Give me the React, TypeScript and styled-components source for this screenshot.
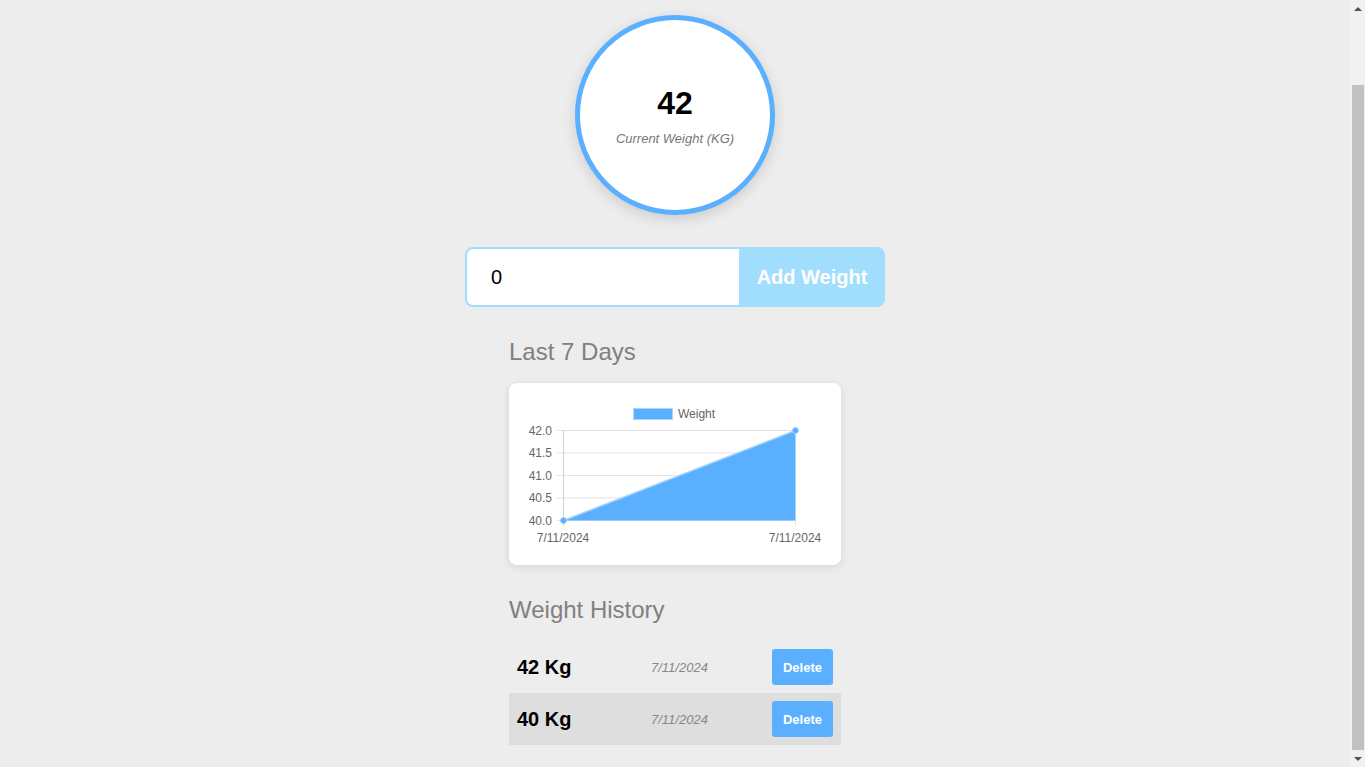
import React, { useEffect } from "react";
import styled, { createGlobalStyle } from "styled-components";

const BLUE = "#5ab0ff";
const LIGHT_BLUE = "#a1ddfd";

const GlobalStyle = createGlobalStyle`
  html, body {
    margin: 0;
    padding: 0;
    background: #ededed;
    font-family: "Liberation Sans", Arial, sans-serif;
  }
  * { box-sizing: border-box; }
`;

const Page = styled.main`
  display: flex;
  flex-direction: column;
  align-items: center;
  padding: 101px 15px 22px 0;
`;

/* decorative copy of the browser's classic scrollbar, drawn over the page edge */
const ScrollRail = styled.aside`
  position: fixed;
  top: 0;
  right: 0;
  width: 15px;
  height: 100vh;
  background: #f1f1f1;
  display: flex;
  flex-direction: column;
`;

const ScrollArrow = styled.div<{ $down?: boolean }>`
  height: 17px;
  display: flex;
  align-items: center;
  justify-content: center;
  &::after {
    content: "";
    width: 0;
    height: 0;
    border-left: 4px solid transparent;
    border-right: 4px solid transparent;
    ${(p) =>
      p.$down ? "border-top: 4px solid #505050;" : "border-bottom: 4px solid #505050;"}
  }
`;

const ScrollTrack = styled.div`
  flex: 1;
  display: flex;
  flex-direction: column;
  justify-content: flex-end;
  padding: 0 1px 0 2px;
`;

const ScrollThumb = styled.div`
  height: 665px;
  background: #c1c1c1;
`;

const WeightCircle = styled.div`
  width: 200px;
  height: 200px;
  border-radius: 50%;
  border: 5px solid ${BLUE};
  background: #fff;
  box-shadow: 0 4px 14px rgba(0, 0, 0, 0.14);
  display: flex;
  flex-direction: column;
  align-items: center;
  justify-content: center;
  padding-top: 2px;
`;

const WeightValue = styled.div`
  font-size: 32px;
  line-height: 32px;
  font-weight: bold;
  color: #000;
`;

const WeightLabel = styled.div`
  margin-top: 12px;
  font-size: 13px;
  line-height: 15px;
  font-style: italic;
  color: #777;
`;

const InputGroup = styled.div`
  margin-top: 32px;
  width: 420px;
  height: 60px;
  display: flex;
`;

const WeightInput = styled.input`
  flex: 1;
  min-width: 0;
  height: 100%;
  border: 2px solid ${LIGHT_BLUE};
  border-right: none;
  border-radius: 8px 0 0 8px;
  padding: 0 24px;
  font-family: "Liberation Sans", Arial, sans-serif;
  font-size: 20px;
  color: #000;
  background: #fff;
  outline: none;
`;

const AddButton = styled.button`
  width: 146px;
  height: 100%;
  border: none;
  border-radius: 0 8px 8px 0;
  background: ${LIGHT_BLUE};
  color: #fff;
  font-family: "Liberation Sans", Arial, sans-serif;
  font-size: 20px;
  font-weight: bold;
  padding: 0;
  cursor: pointer;
`;

const Section = styled.section`
  width: 332px;
  margin-top: 32px;
`;

const SectionTitle = styled.h2`
  margin: 0 0 18px;
  font-size: 24px;
  line-height: 26px;
  font-weight: normal;
  color: #808080;
`;

const ChartCard = styled.div`
  height: 182px;
  background: #fff;
  border-radius: 8px;
  box-shadow: 0 2px 8px rgba(0, 0, 0, 0.1);
  overflow: hidden;
`;

const HistoryList = styled.ul`
  list-style: none;
  margin: 0;
  padding: 0;
`;

const HistoryRow = styled.li<{ $alt?: boolean }>`
  height: 52px;
  padding: 0 8px;
  display: grid;
  grid-template-columns: 134px 1fr auto;
  align-items: center;
  background: ${(p) => (p.$alt ? "#dedede" : "transparent")};
`;

const RowWeight = styled.span`
  font-size: 20px;
  font-weight: bold;
  color: #000;
`;

const RowDate = styled.span`
  font-size: 13px;
  font-style: italic;
  color: #888;
`;

const DeleteButton = styled.button`
  width: 61px;
  height: 36px;
  border: none;
  border-radius: 3px;
  background: ${BLUE};
  color: #fff;
  font-family: "Liberation Sans", Arial, sans-serif;
  font-size: 13px;
  font-weight: bold;
  padding: 0;
  cursor: pointer;
`;

const yTicks = [
  { label: "42.0", y: 47 },
  { label: "41.5", y: 69.5 },
  { label: "41.0", y: 92 },
  { label: "40.5", y: 114.5 },
  { label: "40.0", y: 137 },
];

const WeightChart: React.FC = () => (
  <svg width="332" height="182" viewBox="0 0 332 182">
    <rect x="124.5" y="25.5" width="39" height="11" fill={BLUE} stroke="#a6d6ff" strokeWidth="1" />
    <text x="169" y="35" fontSize="12" fill="#666" fontFamily="Liberation Sans, Arial, sans-serif">
      Weight
    </text>
    {yTicks.map((t) => (
      <g key={t.label}>
        <line x1="48" x2="286" y1={t.y + 0.5} y2={t.y + 0.5} stroke="#e4e4e4" strokeWidth="1" />
        <text
          x="43"
          y={t.y + 4.5}
          fontSize="12"
          fill="#666"
          textAnchor="end"
          fontFamily="Liberation Sans, Arial, sans-serif"
        >
          {t.label}
        </text>
      </g>
    ))}
    <line x1="54.5" x2="54.5" y1="47" y2="143" stroke="#cfcfcf" strokeWidth="1" />
    <line x1="286.5" x2="286.5" y1="137" y2="143" stroke="#e4e4e4" strokeWidth="1" />
    <polygon points="54.5,137.5 286.5,47.5 286.5,137.5" fill={BLUE} />
    <line x1="54.5" y1="137.5" x2="286.5" y2="47.5" stroke="#9ed2ff" strokeWidth="1.5" />
    <circle cx="54.5" cy="137.5" r="3" fill={BLUE} stroke="#9ed2ff" strokeWidth="1" />
    <circle cx="286.5" cy="47.5" r="3" fill={BLUE} stroke="#9ed2ff" strokeWidth="1" />
    <text x="54" y="159" fontSize="12" fill="#666" textAnchor="middle" fontFamily="Liberation Sans, Arial, sans-serif">
      7/11/2024
    </text>
    <text x="286" y="159" fontSize="12" fill="#666" textAnchor="middle" fontFamily="Liberation Sans, Arial, sans-serif">
      7/11/2024
    </text>
  </svg>
);

const history = [
  { weight: 42, date: "7/11/2024" },
  { weight: 40, date: "7/11/2024" },
];

export default function App() {
  useEffect(() => {
    window.scrollTo(0, document.documentElement.scrollHeight);
  }, []);

  return (
    <>
      <GlobalStyle />
      <Page>
        <WeightCircle>
          <WeightValue>42</WeightValue>
          <WeightLabel>Current Weight (KG)</WeightLabel>
        </WeightCircle>

        <InputGroup>
          <WeightInput type="number" defaultValue={0} />
          <AddButton>Add Weight</AddButton>
        </InputGroup>

        <Section>
          <SectionTitle>Last 7 Days</SectionTitle>
          <ChartCard>
            <WeightChart />
          </ChartCard>
        </Section>

        <Section>
          <SectionTitle>Weight History</SectionTitle>
          <HistoryList>
            {history.map((h, i) => (
              <HistoryRow key={i} $alt={i % 2 === 1}>
                <RowWeight>{h.weight} Kg</RowWeight>
                <RowDate>{h.date}</RowDate>
                <DeleteButton>Delete</DeleteButton>
              </HistoryRow>
            ))}
          </HistoryList>
        </Section>
      </Page>
      <ScrollRail aria-hidden="true">
        <ScrollArrow />
        <ScrollTrack>
          <ScrollThumb />
        </ScrollTrack>
        <ScrollArrow $down />
      </ScrollRail>
    </>
  );
}
